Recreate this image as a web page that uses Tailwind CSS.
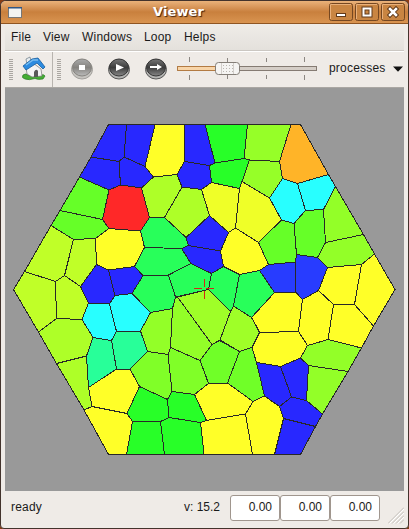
<!DOCTYPE html>
<html lang="en">
<head>
<meta charset="utf-8">
<title>Viewer</title>
<script src="https://cdn.jsdelivr.net/npm/@tailwindcss/browser@4"></script>
</head>
<body class="w-[409px] h-[529px] overflow-hidden bg-[#8a3d14] font-['Liberation_Sans',Arial,sans-serif] text-[12px] text-[#1a1a1a]">
<div class="flex h-[529px] w-[409px] flex-col overflow-hidden rounded-t-[6px] rounded-b-[4px] border border-[#43332c] bg-[#efebe7]">
  <header class="flex h-[23px] shrink-0 items-center border-b border-[#8f5522] bg-linear-to-b from-[#eab27a] via-[#c9803d] to-[#d99450] pr-[3px] pl-[7px]">
    <svg width="14" height="11" viewBox="0 0 14 11"><rect x=".5" y=".5" width="13" height="10" fill="#f3f3f1" stroke="#777"/><path d="M0 .5h14" stroke="#315684" stroke-width="2"/></svg>
    <h1 class="flex-1 pl-[131px] text-left font-['DejaVu_Sans',sans-serif] text-[13px] leading-[22px] font-bold tracking-[0.1px] text-white [text-shadow:1px_1px_1px_#43210a]">Viewer</h1>
    <div class="flex gap-[2px]">
      <svg width="24" height="18" viewBox="0 0 24 18"><rect x=".5" y=".5" width="23" height="17" rx="2" fill="#c98542" stroke="#754721"/><path d="M1.5 16V1.5H22" fill="none" stroke="#e9b07a"/><rect x="7.500" y="10.500" width="9" height="3" fill="#fff" stroke="#613a1a"/></svg>
      <svg width="24" height="18" viewBox="0 0 24 18"><rect x=".5" y=".5" width="23" height="17" rx="2" fill="#c98542" stroke="#754721"/><path d="M1.500 16V1.500H22" fill="none" stroke="#e9b07a"/><rect x="8.500" y="5.500" width="7" height="7" fill="none" stroke="#613a1a" stroke-width="4"/><rect x="8.500" y="5.500" width="7" height="7" fill="none" stroke="#fff" stroke-width="2"/></svg>
      <svg width="24" height="18" viewBox="0 0 24 18"><rect x=".5" y=".5" width="23" height="17" rx="2" fill="#c98542" stroke="#754721"/><path d="M1.500 16V1.500H22" fill="none" stroke="#e9b07a"/><path d="M9 6l6 6M15 6l-6 6" stroke="#613a1a" stroke-width="4.500" stroke-linecap="square"/><path d="M9 6l6 6M15 6l-6 6" stroke="#fff" stroke-width="2.500" stroke-linecap="square"/></svg>
    </div>
  </header>

  <nav class="mx-[4px] flex h-[27px] shrink-0 items-center gap-[13px] border-b border-[#cbc7c2] bg-linear-to-b from-[#efece8] to-[#e4e1dc] pl-[6px] text-[12px] tracking-[0.2px]">
    <span class="w-[19px]">File</span><span class="w-[26px]">View</span><span class="w-[49px]">Windows</span><span class="w-[27px]">Loop</span><span>Helps</span>
  </nav>

  <div class="mx-[4px] flex h-[37px] shrink-0 items-center border-t border-b border-t-white border-b-[#aaa7a3] pb-[2px] pl-[4px]">
    <svg class="mt-[2px]" width="4" height="21" viewBox="0 0 4 21"><path d="M0 .5h4M0 2.500h4M0 4.500h4M0 6.500h4M0 8.500h4M0 10.500h4M0 12.500h4M0 14.500h4M0 16.500h4M0 18.500h4M0 20.500h4" stroke="#aaa6a1"/></svg>
    <svg class="ml-[9px]" width="24" height="25" viewBox="0 0 24 25">
      <path d="M1 19q3-2 5 0h13q3-1 4 1l-2 3q-5 1-8-.500-6 2-10 .500-4-1-2-4z" fill="#45ad34" stroke="#2b7b29" stroke-width=".7"/>
      <path d="M4 3l4-2 1 4-4 4z" fill="#e8edf0" stroke="#697984" stroke-width=".7"/>
      <path d="M4 11l7-4 8 6 1 7-10 1-5-3z" fill="#f4f4f4" stroke="#777" stroke-width=".7"/>
      <path d="M12 21v-5q2-4 4-1v6z" fill="#595959"/>
      <path d="M1 10l9-7 6-1 7 9-2 2-6-6-11 7z" fill="#2c8be0" stroke="#175d9e" stroke-width=".8"/>
      <path d="M4 9l7-5h5" fill="none" stroke="#79bdf0" stroke-width="1.500"/>
    </svg>
    <div class="mt-[2px] ml-[6px] h-[35px] w-px shrink-0 bg-[#b8b4af]"></div>
    <svg class="mt-[2px] ml-[4px]" width="4" height="21" viewBox="0 0 4 21"><path d="M0 .5h4M0 2.500h4M0 4.500h4M0 6.500h4M0 8.500h4M0 10.500h4M0 12.500h4M0 14.500h4M0 16.500h4M0 18.500h4M0 20.500h4" stroke="#aaa6a1"/></svg>
    <svg class="ml-[9px] shrink-0" width="98" height="22" viewBox="0 0 98 22">
      <defs>
        <linearGradient id="dk" x1="0" y1="0" x2="0" y2="1"><stop offset="0" stop-color="#777"/><stop offset=".5" stop-color="#3c3c3c"/><stop offset="1" stop-color="#888"/></linearGradient>
        <linearGradient id="lt" x1="0" y1="0" x2="0" y2="1"><stop offset="0" stop-color="#aaa"/><stop offset=".5" stop-color="#85837f"/><stop offset="1" stop-color="#bbb"/></linearGradient>
      </defs>
      <ellipse cx="12" cy="11.500" rx="10.500" ry="9.500" fill="#c6c4c0" stroke="#a19f9b"/><ellipse cx="12" cy="9.500" rx="9.500" ry="8.500" fill="url(#lt)" stroke="#85837f"/><path d="M9 7h6v5H9z" fill="#fff"/>
      <ellipse cx="49" cy="11.500" rx="10.500" ry="9.500" fill="#b5b5b3" stroke="#555"/><ellipse cx="49" cy="9.500" rx="9.500" ry="8.500" fill="url(#dk)" stroke="#333"/><path d="M46 6l8 3.500-8 3.500z" fill="#fff"/>
      <ellipse cx="86" cy="11.500" rx="10.500" ry="9.500" fill="#b5b5b3" stroke="#555"/><ellipse cx="86" cy="9.500" rx="9.500" ry="8.500" fill="url(#dk)" stroke="#333"/><path d="M80 8h7V6l5 3-5 3v-2h-7z" fill="#fff"/>
    </svg>
    <svg class="ml-[8px] shrink-0" width="142" height="25" viewBox="0 0 142 25">
      <path d="M13.500 1v5M13.500 19v5M51.500 2v5M51.500 19v4M90.500 2v4M90.500 19v4M128.500 1v5M128.500 19v5" stroke="#8c8782"/>
      <rect x="1.500" y="10.500" width="139" height="4" fill="#d5cec7" stroke="#857b73"/>
      <path d="M39 10.500H1.500v4H39" fill="#f8d5a9" stroke="#b37b43"/>
      <rect x="39.500" y="6.500" width="24" height="12" rx="3" fill="#f5f4f2" stroke="#847e77"/>
      <path d="M45.500 7v11M57.500 7v11" stroke="#d2ceca"/>
      <path d="M47 9.500h10M47 12.500h10M47 15.500h10" stroke="#bbb7b2" stroke-dasharray="1 2"/>
    </svg>
    <span class="mb-[2px] ml-[11px] w-[56px] tracking-[0.2px]">processes</span>
    <svg class="ml-[8px] shrink-0" width="10" height="6" viewBox="0 0 10 6"><path d="M0 .5h10L5 5.800z" fill="#111"/></svg>
  </div>

  <main class="mx-[4px] h-[403px] shrink-0 bg-[#999]">
    <svg width="399" height="403" viewBox="5 88 399 403" stroke="#282828" stroke-width="1" shape-rendering="crispEdges">
      <!-- top rows -->
      <g fill="#2828ff">
        <path d="M108.500 124.500H126.500L124 157 119 161.500 91 157z"/>
        <path d="M126.500 124.500H155L145 166.500 124 157z"/>
        <path d="M91 157L119 161.500 120.500 185 109 190 79.500 177z"/>
        <path d="M124 157L145 166.500 153.500 177 141.500 188 120.500 185 119 161.500z"/>
        <path d="M184.500 124.500H205L215 163 209.500 165.500 184.500 161.500z"/>
        <path d="M184.500 161.500L209.500 165.500 211.500 182.500 201.500 189.500 182 187 177 174.500z"/>
        <path d="M209.500 215.500L228.500 232.500 220.500 251 188.500 245.500 186 237.500z"/>
        <path d="M188.500 245.500L220.500 251 223.500 266.500 211.500 273.500 191 263.500 181.500 248.500z"/>
        <path d="M96.500 264.500L108.500 270 115 295.500 109.500 304 88.500 303 80.500 286.500z"/>
        <path d="M108.500 270L134.500 266.500 143 275.500 132 293.500 115 295.500z"/>
      </g>
      <path fill="#ffff28" d="M155 124.500H184.500V161.500L177 174.500 153.500 177 145 166.500z"/>
      <path fill="#28ff28" d="M205 124.500H247.500L244 158.500 215 163z"/>
      <path fill="#28ff28" d="M215 163L244 158.500 249.500 160 242 181.500 239.500 188.500 211.500 182.500 209.500 165.500z"/>
      <g fill="#96ff28">
        <path d="M247.500 124.500H291L279.500 161.500 249.500 160 244 158.500z"/>
        <path d="M249.500 160L279.500 161.500 282.500 178.500 269.500 198 242 181.500z"/>
      </g>
      <path fill="#ffb428" d="M291 124.500H300.500L328.500 174.500 297.500 183.500 282.500 178.500 279.500 161.500z"/>
      <path fill="#28ffff" d="M282.500 178.500L297.500 183.500 305.500 210.500 294 223.500 281.500 220 269.500 198z"/>
      <path fill="#28ffff" d="M297.500 183.500L328.500 174.500 335.500 186.500 323.500 209.500 305.500 210.500z"/>
      <path fill="#ff2828" d="M120.500 185L141.500 188 149.500 217.500 140.500 231 109 228.500 102.500 219.500 109 190z"/>
      <path fill="#66ff28" d="M79.500 177L109 190 102.500 219.500 60 210.500z"/>
      <path fill="#66ff28" d="M60 210.500L102.500 219.500 109 228.500 95.500 238.500 73.500 239.500 51 225.500z"/>
      <path fill="#aeff28" d="M153.500 177L177 174.500 182 187 164.500 217.500H149.500L141.500 188z"/>
      <path fill="#aeff28" d="M182 187L201.500 189.500 209.500 215.500 186 237.500 164.500 217.500z"/>
      <path fill="#efff28" d="M211.500 182.500L239.500 188.500 235.500 228 228.500 232.500 209.500 215.500 201.500 189.500z"/>
      <path fill="#efff28" d="M242 181.500L269.500 198 281.500 220 258.500 242.500 235.500 228 239.500 188.500z"/>
      <path fill="#ffff28" d="M235.500 228L258.500 242.500 268.500 264.500 259.500 270.500 239.500 274.500 223.500 266.500 220.500 251 228.500 232.500z"/>
      <!-- left side -->
      <g fill="#c0ff28">
        <path d="M51 225.500L73.500 239.500 64.500 275.500 55.500 281.500 24.500 271.500z"/>
        <path d="M73.500 239.500L95.500 238.500 96.500 264.500 80.500 286.500 64.500 275.500z"/>
        <path d="M24.500 271.500L55.500 281.500 56.500 318.500 38.500 332 13.500 289.500z"/>
        <path d="M55.500 281.500L64.500 275.500 80.500 286.500 88.500 303 82 319.500 56.500 318.500z"/>
      </g>
      <path fill="#aeff28" d="M38.500 332L56.500 318.500 82 319.500 93 337.500 86.500 356 56.500 363.500z"/>
      <path fill="#aeff28" d="M86.500 356L88.500 387.500 92 406.500 84 410 56.500 363.500z"/>
      <path fill="#ffff28" d="M95.500 238.500L109 228.500 140.500 231 144.500 247.500 134.500 266.500 108.500 270 96.500 264.500z"/>
      <path fill="#28ffff" d="M88.500 303L109.500 304 116.500 331.500 111.500 340.500 93 337.500 82 319.500z"/>
      <path fill="#28ffff" d="M115 295.500L132 293.500 150.500 312.500 140.500 331 116.500 331.500 109.500 304z"/>
      <path fill="#28ff99" d="M93 337.500L111.500 340.500 116.500 369 88.500 387.500 86.500 356z"/>
      <path fill="#28ff99" d="M116.500 331.500L140.500 331 147.500 351.500 130 369H116.500L111.500 340.500z"/>
      <!-- centre -->
      <g fill="#28ff5a">
        <path d="M149.500 217.500H164.500L186 237.500 188.500 245.500 181.500 248.500 144.500 247.500 140.500 231z"/>
        <path d="M144.500 247.500L181.500 248.500 191 263.500 168.500 275 143 275.500 134.500 266.500z"/>
        <path d="M143 275.500L168.500 275 175.500 297 172.500 308.500 150.500 312.500 132 293.500z"/>
        <path d="M168.500 275L191 263.500 211.500 273.500 208.500 289.500 175.500 297z"/>
        <path d="M211.500 273.500L223.500 266.500 239.500 274.500 233.500 306 230.500 311.500 208.500 289.500z"/>
        <path d="M239.500 274.500L259.500 270.500 274.500 292.500 251.500 317.500 233.500 306z"/>
      </g>
      <g fill="#9fff28">
        <path d="M177.500 297L208.500 289.500 230.500 311.500 220 340 212 344.500z"/>
        <path d="M175.500 297H177.500L212 344.500 200 360.500 170.500 347.500 172.500 308.500z" fill="#93ff28"/>
        <path d="M150.500 312.500L172.500 308.500 170.500 347.500 168 354.500 147.500 351.500 140.500 331z" fill="#93ff28"/>
        <path d="M233.500 306L251.500 317.500 259.500 332.500 252 347.500 239.500 351.500 220 340 230.500 311.500z"/>
      </g>
      <g fill="#80ff28">
        <path d="M147.500 351.500L168 354.500 172 391.500 167.500 399.500 139.500 386.500 130 369z"/>
        <path d="M170.500 347.500L200 360.500 208.500 383.500 194.500 394.500 172 391.500 168 354.500z"/>
        <path d="M219.500 340.500L239.500 351.500 227.500 383H208.500L200 360.500 212 344.500z" fill="#70ff28"/>
        <path d="M239.500 351.500L252 347.500 256.500 362.500 264.500 396 253 401.500 227.500 383z" fill="#70ff28"/>
      </g>
      <!-- right side -->
      <g fill="#66ff28">
        <path d="M281.500 220L294 223.500 296.500 254.500 295.500 262 268.500 264.500 258.500 242.500z"/>
        <path d="M305.500 210.500L323.500 209.500 325.500 242.500 317.500 257.500 296.500 254.500 294 223.500z"/>
      </g>
      <g fill="#93ff28">
        <path d="M335.500 186.500L363.500 234.500 325.500 242.500 323.500 209.500z"/>
        <path d="M363.500 234.500L374.500 254 361.500 264.500 327.500 267.500 317.500 257.500 325.500 242.500z"/>
        <path d="M328 339.500L361.500 348 348 371.500 308.500 365.500 300.500 358 307.500 345.500z"/>
        <path d="M308.500 365.500L348 371.500 322.500 414 306.500 400.500z"/>
      </g>
      <g fill="#283cff">
        <path d="M268.500 264.500L295.500 262 296 292.500H274.500L259.500 270.500z"/>
        <path d="M296.500 254.500L317.500 257.500 327.500 267.500 318.500 290.500 302.500 299.500 296 292.500 295.500 262z"/>
      </g>
      <g fill="#ffff28">
        <path d="M327.500 267.500L361.500 264.500 354.500 304.500H333.500L318.500 290.500z"/>
        <path d="M361.500 264.500L374.500 254 395 289.500 373.500 326 354.500 304.500z"/>
        <path d="M333.500 304.500H354.500L373.500 326 361.500 348 328 339.500z"/>
        <path d="M318.500 290.500L333.500 304.500 328 339.500 307.500 345.500 298.500 331.500 302.500 299.500z"/>
        <path d="M274.500 292.500H296L302.500 299.500 298.500 331.500 260 332.500 251.500 317.500z"/>
        <path d="M260 332.500L298.500 331.500 307.500 345.500 300.500 358 280.500 366.500 256.500 362.500 252 347.500z"/>
        <!-- bottom -->
        <path d="M116.500 369H130L139.500 386.500 127 413.500 92 406.500 88.500 387.500z"/>
        <path d="M92 406.500L127 413.500 132.500 421.500 126.500 454.500H108.500L84 410z"/>
        <path d="M208.500 383.500L227.500 383 253 401.500 245.500 414 206.500 420.500 194.500 394.500z"/>
        <path d="M206.500 420.500L245.500 414 252.500 454.500H204L200.500 422.500z"/>
        <path d="M264.500 396L279.500 406.500 283.500 418.500 274.500 454.500H252.500L245.500 414 253 401.500z"/>
      </g>
      <g fill="#28ff28">
        <path d="M139.500 386.500L167.500 399.500 169 417.500 160.500 421.500H132.500L127 413.500z"/>
        <path d="M172 391.500L194.500 394.500 206.500 420.500 200.500 422.500 169 417.500 167.500 399.500z"/>
        <path d="M132.500 421.500H160.500L164.500 454.500H126.500z"/>
        <path d="M169 417.500L200.500 422.500 204 454.500H164.500L160.500 421.500z"/>
      </g>
      <g fill="#2828ff">
        <path d="M256.500 362.500L280.500 366.500 291.500 397 279.500 406.500 264.500 396z"/>
        <path d="M280.500 366.500L300.500 358 308.500 365.500 306.500 400.500 291.500 397z"/>
        <path d="M291.500 397L306.500 400.500 322.500 414 315.500 426.500 283.500 418.500 279.500 406.500z"/>
        <path d="M283.500 418.500L315.500 426.500 300.500 454.500H274.500z"/>
      </g>
      <path d="M194 288.500h8M206 288.500h8M204.500 279v8M204.500 291v8" stroke="#d42814" fill="none"/>
    </svg>
  </main>

  <footer class="mx-[4px] flex min-h-0 flex-1 items-start pt-[4px] pl-[6px]">
    <span class="w-[173px] leading-[24px] tracking-[0.2px]">ready</span>
    <span class="w-[46px] leading-[24px]">v: 15.2</span>
    <span class="h-[26px] w-[50px] rounded-[3px] border border-[#a0968e] bg-white pr-[7px] text-right leading-[22px]">0.00</span>
    <span class="h-[26px] w-[50px] rounded-[3px] border border-[#a0968e] bg-white pr-[7px] text-right leading-[22px]">0.00</span>
    <span class="h-[26px] w-[50px] rounded-[3px] border border-[#a0968e] bg-white pr-[7px] text-right leading-[22px]">0.00</span>
    <svg class="mt-[12px] ml-[8px]" width="16" height="17" viewBox="0 0 16 17"><path d="M0 16.500L16 .5M4 16.500l12-12M8 16.500l8-8M12 16.500l4-4" stroke="#c2beb9"/><path d="M1.500 16.500l15-15M5.500 16.500l11-11M9.500 16.500l7-7" stroke="#fff"/></svg>
  </footer>
</div>
</body>
</html>
